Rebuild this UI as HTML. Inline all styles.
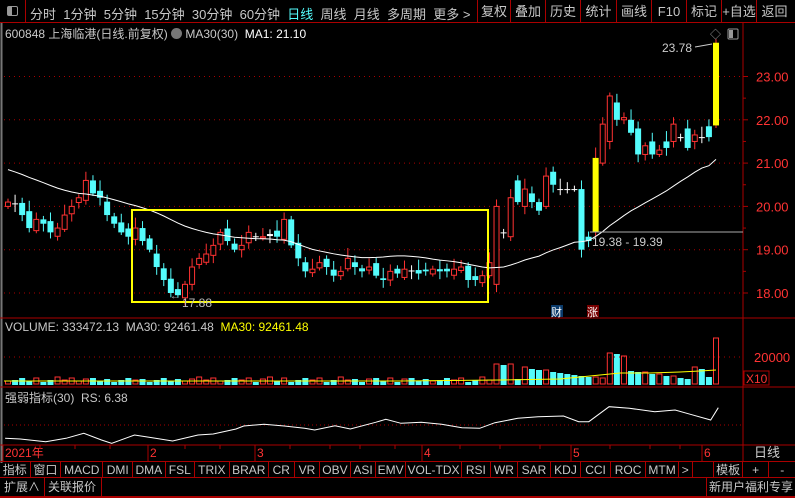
<!DOCTYPE html><html><head><meta charset="utf-8"><style>
*{margin:0;padding:0;box-sizing:border-box}
body{width:795px;height:498px;background:#000;overflow:hidden;font-family:"Liberation Sans","Noto Sans CJK SC",sans-serif;font-size:12px;color:#c8c8c8;position:relative}
.abs{position:absolute}
</style></head><body>
<div class="abs" style="left:0;top:0;width:795px;height:23px;border-bottom:1px solid #a00"></div>
<div class="abs" style="left:25px;top:0;width:1px;height:23px;background:#a00"></div>
<div class="abs" style="left:7px;top:6px;width:11px;height:10px;border:1px solid #999;border-radius:2px"><div style="width:4px;height:8px;background:#999"></div></div>
<div class="abs" style="left:30px;top:4px;font-size:13px;word-spacing:0">
<span>分时</span>&nbsp;&nbsp;<span>1分钟</span>&nbsp;&nbsp;<span>5分钟</span>&nbsp;&nbsp;<span>15分钟</span>&nbsp;&nbsp;<span>30分钟</span>&nbsp;&nbsp;<span>60分钟</span>&nbsp;&nbsp;<span style="color:#54fcfc">日线</span>&nbsp;&nbsp;<span>周线</span>&nbsp;&nbsp;<span>月线</span>&nbsp;&nbsp;<span>多周期</span>&nbsp;&nbsp;<span>更多 &gt;</span></div>
<div class="abs" style="left:477px;top:0;height:23px;display:flex;font-size:13px">
<span style="width:34px;border-left:1px solid #a00;border-right:1px solid #a00;text-align:center;line-height:23px">复权</span><span style="width:35px;border-right:1px solid #a00;text-align:center;line-height:23px">叠加</span><span style="width:35px;border-right:1px solid #a00;text-align:center;line-height:23px">历史</span><span style="width:36px;border-right:1px solid #a00;text-align:center;line-height:23px">统计</span><span style="width:35px;border-right:1px solid #a00;text-align:center;line-height:23px">画线</span><span style="width:35px;border-right:1px solid #a00;text-align:center;line-height:23px">F10</span><span style="width:35px;border-right:1px solid #a00;text-align:center;line-height:23px">标记</span><span style="width:35px;border-right:1px solid #a00;text-align:center;line-height:23px">+自选</span><span style="width:35px;text-align:center;line-height:23px">返回</span></div>
<div class="abs" style="left:5px;top:25px">600848 上海临港(日线.前复权) <span style="display:inline-block;width:11px;height:11px;border-radius:50%;background:#777;vertical-align:-1px"></span> MA30(30)&nbsp; <span style="color:#fff">MA1: 21.10</span></div>
<div class="abs" style="left:5px;top:320px">VOLUME: 333472.13&nbsp; MA30: 92461.48&nbsp; <span style="color:#ff0">MA30: 92461.48</span></div>
<div class="abs" style="left:5px;top:389px">强弱指标(30)&nbsp; RS: 6.38</div>
<svg class="abs" style="left:0;top:0" width="795" height="498" id="s"></svg>
<div class="abs" style="left:0;top:461px;width:795px;height:17px;border-top:1px solid #a00;border-bottom:1px solid #a00;display:flex;font-size:12px;line-height:16px">
<span style="width:31px;border-right:1px solid #a00;text-align:center">指标</span><span style="width:31px;border-right:1px solid #a00;text-align:center">窗口</span><span style="width:43px;border-right:1px solid #a00;text-align:center">MACD</span><span style="width:30px;border-right:1px solid #a00;text-align:center">DMI</span><span style="width:33px;border-right:1px solid #a00;text-align:center">DMA</span><span style="width:30px;border-right:1px solid #a00;text-align:center">FSL</span><span style="width:35px;border-right:1px solid #a00;text-align:center">TRIX</span><span style="width:40px;border-right:1px solid #a00;text-align:center">BRAR</span><span style="width:26px;border-right:1px solid #a00;text-align:center">CR</span><span style="width:26px;border-right:1px solid #a00;text-align:center">VR</span><span style="width:31px;border-right:1px solid #a00;text-align:center">OBV</span><span style="width:26px;border-right:1px solid #a00;text-align:center">ASI</span><span style="width:30px;border-right:1px solid #a00;text-align:center">EMV</span><span style="width:57px;border-right:1px solid #a00;text-align:center">VOL-TDX</span><span style="width:29px;border-right:1px solid #a00;text-align:center">RSI</span><span style="width:28px;border-right:1px solid #a00;text-align:center">WR</span><span style="width:33px;border-right:1px solid #a00;text-align:center">SAR</span><span style="width:31px;border-right:1px solid #a00;text-align:center">KDJ</span><span style="width:30px;border-right:1px solid #a00;text-align:center">CCI</span><span style="width:36px;border-right:1px solid #a00;text-align:center">ROC</span><span style="width:33px;border-right:1px solid #a00;text-align:center">MTM</span><span style="width:14px;border-right:1px solid #a00;text-align:center">&gt;</span><span style="width:22px;border-right:1px solid #a00"></span><span style="width:29px;border-right:1px solid #a00;text-align:center">模板</span><span style="width:27px;border-right:1px solid #a00;text-align:center">+</span><span style="width:26px;text-align:center">-</span></div>
<div class="abs" style="left:0;top:478px;width:795px;height:20px;display:flex;line-height:19px;border-bottom:2px solid #a00">
<span style="width:45px;border-right:1px solid #a00;padding-left:4px">扩展∧</span><span style="width:57px;border-right:1px solid #a00;padding-left:3px">关联报价</span><span style="flex:1;border-right:1px solid #a00"></span><span style="width:88px;padding-left:2px;white-space:nowrap;overflow:hidden">新用户福利专享</span></div>
<script>
var s=document.getElementById('s'),h='';
function Y(p){return 293-(p-18)*43.3}
h+='<line x1="743" y1="23" x2="743" y2="461" stroke="#a00"/>';
h+='<rect x="0.5" y="23" width="2" height="440" fill="#777"/>';
[318,387,445].forEach(function(y){h+='<line x1="0" y1="'+y+'" x2="795" y2="'+y+'" stroke="#a00"/>'});
[18,19,20,21,22,23].forEach(function(p){var y=Y(p);h+='<line x1="4" y1="'+y+'" x2="743" y2="'+y+'" stroke="#a00" stroke-dasharray="1,4"/><line x1="743" y1="'+y+'" x2="748" y2="'+y+'" stroke="#a00"/><text x="756" y="'+(y+5)+'" fill="#f33" font-size="13">'+p+'.00</text>'});
[18.5,19.5,20.5,21.5,22.5].forEach(function(p){var y=Y(p);h+='<line x1="743" y1="'+y+'" x2="746" y2="'+y+'" stroke="#a00"/>'});
var C=[20.1,20.05,19.8,19.5,19.7,19.6,19.4,19.5,19.8,20.0,20.2,20.6,20.3,20.2,19.8,19.6,19.4,19.3,19.5,19.2,19.0,18.6,18.3,18.0,17.95,18.2,18.6,18.8,18.9,19.1,19.4,19.2,19.0,19.1,19.4,19.3,19.3,19.35,19.3,19.7,19.1,18.8,18.5,18.55,18.7,18.6,18.4,18.5,18.8,18.6,18.5,18.6,18.4,18.3,18.5,18.45,18.55,18.5,18.45,18.5,18.55,18.5,18.5,18.55,18.6,18.3,18.3,18.4];
var L=[[18.4,18.7],[18.2,20.0],[19.4,19.4],[19.3,20.2],[20.6,20.1],[20.0,20.4],[20.3,20.1],[20.1,19.9],[20.0,20.7],[20.8,20.5],[20.4,20.4],[20.4,20.4],[20.4,20.4],[20.4,19.0],[19.3,19.2],[19.4,21.12],[21.0,21.9],[21.5,22.55],[22.4,22.0],[22.0,22.05],[22.0,21.7],[21.8,21.2],[21.2,21.4],[21.5,21.2],[21.2,21.3],[21.5,21.35],[21.5,21.9],[21.6,21.6],[21.8,21.35],[21.5,21.65],[21.6,21.6],[21.85,21.6],[21.87,23.78]];
var D=[];for(var i=0;i<C.length;i++){var o=i?C[i-1]+((i*37%7)-3)*0.03:20.0;D.push([o,C[i]])}
L.forEach(function(d){D.push(d)});
var all=[];for(i=0;i<30;i++)all.push(21.7-i*0.055);D.forEach(function(d){all.push(d[1])});
var ma=[];
D.forEach(function(d,i){var x=8+i*7.08;var o=d[0],c=d[1],hi=Math.max(o,c)+0.08+(i*13%5)*0.04,lo=Math.min(o,c)-0.06-(i*7%4)*0.04;
var up=c>o,col=up?'#ff3232':'#54fcfc';if(i==83||i==100)col='#ff0';if(Math.abs(c-o)<0.02)col='#fff';
h+='<line x1="'+x+'" y1="'+Y(hi)+'" x2="'+x+'" y2="'+Y(lo)+'" stroke="'+(col=='#ff0'?'#ff3232':col)+'"/>';
var t=Y(Math.max(o,c)),b=Y(Math.min(o,c)),hh=Math.max(1,b-t);
if(col=='#ff0')h+='<rect x="'+(x-3)+'" y="'+t+'" width="6" height="'+hh+'" fill="#ff0"/>';
else if(up)h+='<rect x="'+(x-2.5)+'" y="'+t+'" width="5" height="'+hh+'" fill="#000" stroke="'+col+'"/>';
else h+='<rect x="'+(x-3)+'" y="'+t+'" width="6" height="'+hh+'" fill="'+col+'"/>';
var s2=0;for(var k=i;k<i+30;k++)s2+=all[k+1];ma.push(x+','+Y(s2/30));
var v=3+(i*17%5);if(i>=69)v=6+(i*11%12);if(i==69||i==70||i==71)v=20;if(i==85||i==86)v=31;if(i==87)v=28;if(i==99)v=8;if(i==100)v=46;
var vc=up?'#ff3232':'#54fcfc';
if(up)h+='<rect x="'+(x-2.5)+'" y="'+(384-v)+'" width="5" height="'+v+'" fill="none" stroke="'+vc+'"/>';else h+='<rect x="'+(x-3)+'" y="'+(385-v)+'" width="6" height="'+v+'" fill="'+vc+'"/>';
});
h+='<polyline points="'+ma.join(' ')+'" fill="none" stroke="#fff" stroke-width="1"/>';
h+='<polyline points="4,381 400,381 500,380 560,379 580,377 600,375 620,373 650,373 680,372 700,371 716,370" fill="none" stroke="#ff0"/>';
h+='<line x1="4" y1="357" x2="743" y2="357" stroke="#a00" stroke-dasharray="1,4"/><text x="754" y="362" fill="#f33" font-size="13">20000</text>';
h+='<rect x="744" y="371" width="25" height="14" fill="none" stroke="#a00"/><text x="746" y="383" fill="#f33" font-size="12">X10</text>';
var R=[[10,370],[40,372],[90,380],[130,370],[165,355],[200,375],[220,385],[265,360],[300,368],[340,378],[390,360],[420,357],[465,342],[480,333],[520,328],[560,333],[600,340],[620,345],[660,332],[690,342],[740,322],[760,313],[790,325],[830,322],[870,328],[910,338],[945,340],[975,323],[1020,310],[1060,305],[1110,303],[1140,320],[1160,320],[1200,275],[1240,280],[1290,290],[1330,285],[1360,298],[1400,315],[1415,278]];
h+='<line x1="4" y1="425" x2="743" y2="425" stroke="#a00" stroke-dasharray="1,3"/>';
h+='<polyline points="'+R.map(function(p){return (p[0]/1.97).toFixed(1)+','+(315+p[1]/3).toFixed(1)}).join(' ')+'" fill="none" stroke="#fff"/>';
h+='<rect x="132" y="210" width="356" height="92" fill="none" stroke="#ff0" stroke-width="2"/>';
h+='<text x="182" y="307" fill="#bbb" font-size="12">17.88</text><text x="170" y="299" fill="#bbb" font-size="10">\u2190</text>';
h+='<line x1="590" y1="232" x2="743" y2="232" stroke="#aaa"/><text x="592" y="246" fill="#ccc" font-size="12">19.38 - 19.39</text>';
h+='<text x="662" y="52" fill="#ccc" font-size="12">23.78</text><line x1="695" y1="47" x2="712" y2="44" stroke="#ccc"/>';
h+='<text x="710" y="38" fill="#999" font-size="11">◇</text><rect x="728" y="29" width="10" height="10" fill="none" stroke="#999" rx="1"/><rect x="729" y="30" width="4" height="8" fill="#999"/>';
h+='<rect x="551" y="305" width="12" height="12" fill="#0a3a6a"/><text x="551" y="316" fill="#fff" font-size="11">财</text>';
h+='<rect x="587" y="305" width="12" height="12" fill="#700"/><text x="587" y="316" fill="#fff" font-size="11">涨</text>';
[[5,'2021年'],[150,'2'],[257,'3'],[424,'4'],[573,'5'],[704,'6']].forEach(function(d){h+='<line x1="'+(d[0]-2)+'" y1="445" x2="'+(d[0]-2)+'" y2="461" stroke="#a00"/><text x="'+d[0]+'" y="457" fill="#f33" font-size="12">'+d[1]+'</text>'});
[40,75,110,185,220,290,330,360,395,460,500,540,610,650,680].forEach(function(x){h+='<line x1="'+x+'" y1="445" x2="'+x+'" y2="449" stroke="#a00"/>'});
h+='<text x="754" y="457" fill="#ccc" font-size="13">日线</text>';
s.innerHTML=h;
</script>
</body></html>
